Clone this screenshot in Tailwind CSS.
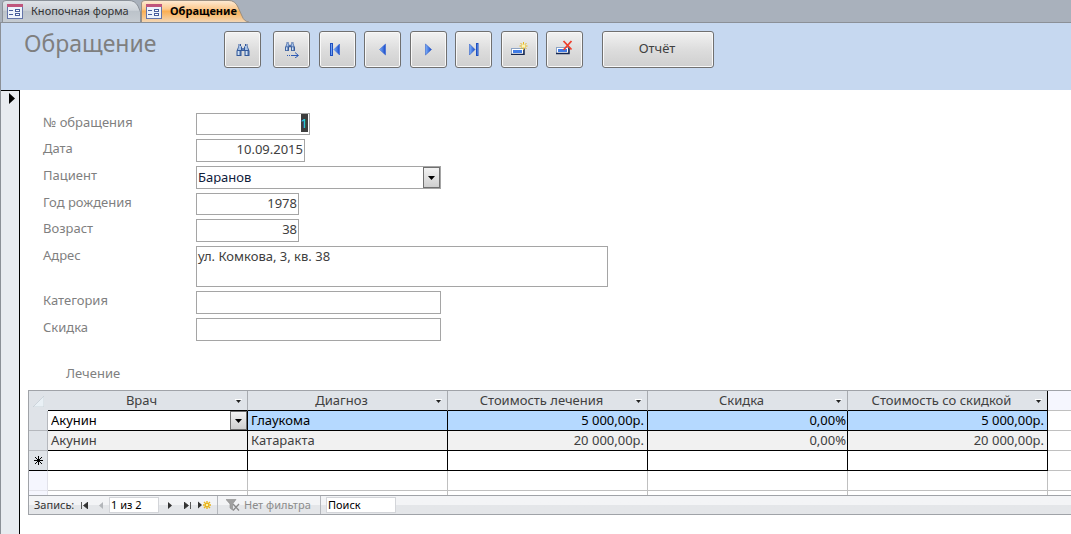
<!DOCTYPE html>
<html lang="ru">
<head>
<meta charset="utf-8">
<meta name="viewport" content="width=device-width, initial-scale=1">
<title>Обращение</title>
<script src="https://cdn.jsdelivr.net/npm/@tailwindcss/browser@4"></script>
</head>
<body class="flex min-h-screen flex-col overflow-x-hidden bg-white font-['Noto_Sans','Open_Sans',sans-serif] text-[13px] leading-5 text-[#404040]">

<svg class="absolute size-0" aria-hidden="true">
  <defs>
    <linearGradient id="gTab" x1="0" y1="0" x2="0" y2="1">
      <stop offset="0" stop-color="#dfe3e7"/><stop offset=".45" stop-color="#ced3d9"/><stop offset=".5" stop-color="#bcc3ca"/><stop offset="1" stop-color="#c6ccd2"/>
    </linearGradient>
    <linearGradient id="gAct" x1="0" y1="0" x2="0" y2="1">
      <stop offset="0" stop-color="#fdebd6"/><stop offset=".4" stop-color="#fcc98e"/><stop offset=".5" stop-color="#fbaf52"/><stop offset="1" stop-color="#f3d6b4"/>
    </linearGradient>
    <linearGradient id="gBlue" x1="0" y1="0" x2="1" y2="0">
      <stop offset="0" stop-color="#7fb2fb"/><stop offset="1" stop-color="#1748c8"/>
    </linearGradient>
    <linearGradient id="gBin" x1="0" y1="0" x2="1" y2="0">
      <stop offset="0" stop-color="#3a62a0"/><stop offset=".35" stop-color="#d5e5f7"/><stop offset="1" stop-color="#234c92"/>
    </linearGradient>
    <symbol id="form" viewBox="0 0 16 15">
      <rect x=".5" y=".5" width="15" height="14" fill="#eef3fb" stroke="#6474a8"/>
      <rect x="0" y="0" width="16" height="3" fill="#c0557c"/>
      <path d="M2 6.500h4M2 10.500h4" stroke="#4a5f9c"/>
      <rect x="8.500" y="5.500" width="4" height="2" fill="#fff" stroke="#4a5f9c"/>
      <rect x="8.500" y="9.500" width="4" height="2" fill="#fff" stroke="#4a5f9c"/>
    </symbol>
    <symbol id="bino" viewBox="0 0 16 14">
      <path d="M3.500 1h2.500v2l1 1v1h2v-1l1-1v-2h2.500v2l2 5v5h-5v-5h-3v5h-5v-5l2-5z" fill="#34599a"/>
      <path d="M4 3h2v4h-3zM10 3h2l1 4h-3z" fill="#a9c4e8"/>
      <rect x="2" y="8" width="4" height="4" fill="url(#gBin)"/>
      <rect x="10" y="8" width="4" height="4" fill="url(#gBin)"/>
      <path d="M4 2h1M11 2h1M7.500 6h1" stroke="#dfeafa"/>
    </symbol>
    <symbol id="rec" viewBox="0 0 16 14">
      <rect x=".5" y="6.500" width="12" height="6" fill="#fff" stroke="#8da3c4"/>
      <path d="M0 12.500h13v-6" fill="none" stroke="#15264f" stroke-width="1.500"/>
      <rect x="2" y="8" width="9" height="3" fill="#3f7be6"/>
    </symbol>
    <symbol id="down" viewBox="0 0 7 4"><path d="M0 0h7L3.500 4z" fill="#000"/></symbol>
    <symbol id="hdown" viewBox="0 0 7 4"><path d="M0 0h7" stroke="#fff" stroke-width="2"/><path d="M1 1h5L3.500 4z" fill="#222"/></symbol>
  </defs>
</svg>

<nav class="flex h-[23px] shrink-0 border-b border-[#8b9097] bg-[#a9b1bc] pl-[2px]" aria-label="Открытые формы">
  <button type="button" class="relative flex h-[22px] w-[139px] items-center gap-2 pl-[5px] text-[11px] text-[#333]">
    <svg class="absolute inset-0" width="139" height="22" aria-hidden="true"><path d="M.5 22V3Q.5 .5 4 .5H127Q133 .5 136 6L138.500 12V22" fill="url(#gTab)" stroke="#8b9199"/></svg>
    <svg class="relative shrink-0" width="16" height="15" aria-hidden="true"><use href="#form"/></svg>
    <span class="relative whitespace-nowrap">Кнопочная форма</span>
  </button>
  <button type="button" aria-current="page" class="relative flex h-[22px] w-[108px] items-center gap-2 pl-[5px] text-[11px] font-bold text-black">
    <svg class="absolute inset-0" width="108" height="22" aria-hidden="true"><path d="M.5 22V3Q.5 .5 4 .5H88Q94 .5 97 7L101 16Q103 21.500 108 22" fill="url(#gAct)" stroke="#9a8f82"/></svg>
    <svg class="relative shrink-0" width="16" height="15" aria-hidden="true"><use href="#form"/></svg>
    <span class="relative">Обращение</span>
  </button>
</nav>

<div class="flex grow flex-col border-l border-[#8b9097]">
  <header class="flex h-[67px] shrink-0 items-start bg-[#c6d8f0] pl-[23px] pt-2">
    <h1 class="w-[200px] text-[23px] leading-6 text-[#7f7f7f]">Обращение</h1>
    <button type="button" aria-label="Найти" class="flex size-[37px] items-center justify-center rounded-[3px] border border-[#707070] bg-linear-to-b from-[#f2f2f2] from-0% via-[#dddddd] via-50% to-[#cfcfcf] shadow-[inset_0_0_0_1px_#f8f8f8]">
      <svg width="16" height="14"><use href="#bino"/></svg>
    </button>
    <div class="ml-3 flex w-[310px] justify-between">
      <button type="button" aria-label="Найти далее" class="flex size-[37px] items-center justify-center rounded-[3px] border border-[#707070] bg-linear-to-b from-[#f2f2f2] from-0% via-[#dddddd] via-50% to-[#cfcfcf] shadow-[inset_0_0_0_1px_#f8f8f8]">
        <svg width="16" height="17" viewBox="0 0 16 17"><use href="#bino" x="0" y="0" width="12" height="11"/><path d="M3 14.500h1M5 14.500h1M7 14.500h7" stroke="#2f5bb5"/><path d="M11 11.500l3.500 3L11 17" fill="none" stroke="#2f5bb5"/></svg>
      </button>
      <button type="button" aria-label="Первая запись" class="flex size-[37px] items-center justify-center rounded-[3px] border border-[#707070] bg-linear-to-b from-[#f2f2f2] from-0% via-[#dddddd] via-50% to-[#cfcfcf] shadow-[inset_0_0_0_1px_#f8f8f8]">
        <svg class="mr-1" width="10" height="13" viewBox="0 0 10 13"><rect x=".5" y=".5" width="2" height="12" fill="#6f9ff0" stroke="#1f4fc0"/><path d="M9.500 1v11L4 6.500z" fill="url(#gBlue)" stroke="#2a5cd0" stroke-width=".5"/></svg>
      </button>
      <button type="button" aria-label="Предыдущая запись" class="flex size-[37px] items-center justify-center rounded-[3px] border border-[#707070] bg-linear-to-b from-[#f2f2f2] from-0% via-[#dddddd] via-50% to-[#cfcfcf] shadow-[inset_0_0_0_1px_#f8f8f8]">
        <svg width="7" height="13" viewBox="0 0 7 13"><path d="M6.500 1v11L.5 6.500z" fill="url(#gBlue)" stroke="#2a5cd0" stroke-width=".5"/></svg>
      </button>
      <button type="button" aria-label="Следующая запись" class="flex size-[37px] items-center justify-center rounded-[3px] border border-[#707070] bg-linear-to-b from-[#f2f2f2] from-0% via-[#dddddd] via-50% to-[#cfcfcf] shadow-[inset_0_0_0_1px_#f8f8f8]">
        <svg width="7" height="13" viewBox="0 0 7 13"><path d="M.5 1v11l6-5.500z" fill="url(#gBlue)" stroke="#1f4fc0" stroke-width=".5"/></svg>
      </button>
      <button type="button" aria-label="Последняя запись" class="flex size-[37px] items-center justify-center rounded-[3px] border border-[#707070] bg-linear-to-b from-[#f2f2f2] from-0% via-[#dddddd] via-50% to-[#cfcfcf] shadow-[inset_0_0_0_1px_#f8f8f8]">
        <svg width="10" height="13" viewBox="0 0 10 13"><rect x="7.500" y=".5" width="1.500" height="12" fill="#6f9ff0" stroke="#1f4fc0"/><path d="M.5 1v11L6 6.500z" fill="url(#gBlue)" stroke="#1f4fc0" stroke-width=".5"/></svg>
      </button>
      <button type="button" aria-label="Добавить запись" class="flex size-[37px] items-center justify-center rounded-[3px] border border-[#707070] bg-linear-to-b from-[#f2f2f2] from-0% via-[#dddddd] via-50% to-[#cfcfcf] shadow-[inset_0_0_0_1px_#f8f8f8]">
        <svg class="mb-1" width="17" height="14" viewBox="0 0 17 14"><use href="#rec" x="0" y="1" width="16" height="14"/><path d="M12.500 1v8M8.500 5h8M9.500 2l6 6M15.500 2l-6 6" stroke="#e8b91e"/><rect x="11" y="3.500" width="3" height="3" fill="#fff6b0"/></svg>
      </button>
      <button type="button" aria-label="Удалить запись" class="flex size-[37px] items-center justify-center rounded-[3px] border border-[#707070] bg-linear-to-b from-[#f2f2f2] from-0% via-[#dddddd] via-50% to-[#cfcfcf] shadow-[inset_0_0_0_1px_#f8f8f8]">
        <svg class="mb-1" width="17" height="15" viewBox="0 0 17 15"><use href="#rec" x="0" y="1" width="16" height="14"/><path d="M7.500 1l8 8.500M15.500 1l-8 9" stroke="#ee3f2c" stroke-width="1.800"/></svg>
      </button>
    </div>
    <button type="button" class="ml-[19px] h-[37px] w-[112px] rounded-[3px] border border-[#707070] bg-linear-to-b from-[#f2f2f2] from-0% via-[#dddddd] via-50% to-[#cfcfcf] pb-1 pr-[2px] shadow-[inset_0_0_0_1px_#f8f8f8]">Отчёт</button>
  </header>

  <div class="flex grow">
    <button type="button" aria-label="Выделить запись" class="flex w-[19px] shrink-0 items-start justify-end border-r border-t border-black bg-[#e8ebf0] pr-1 pt-[2px]">
      <svg width="6" height="11" viewBox="0 0 6 11"><path d="M0 0v11l6-5.500z" fill="#000"/></svg>
    </button>

    <main class="min-w-0 grow pl-2 pt-[23px]">
      <form class="flex flex-col gap-1 pl-[15px] text-[13px]">
        <div class="flex items-start"><label for="num" class="w-[153px] leading-[18px] text-[#7f7f7f]">№ обращения</label>
          <input id="num" value="1" autofocus class="h-[22px] w-[114px] border border-[#a5a5a5] px-px pb-[2px] text-right leading-5 outline-none selection:bg-[#3d3d3d] selection:text-[#22d8f0]"></div>
        <div class="flex items-start"><label for="date" class="w-[153px] leading-[18px] text-[#7f7f7f]">Дата</label>
          <input id="date" value="10.09.2015" class="h-[23px] w-[109px] border border-[#a5a5a5] px-px pb-1 text-right"></div>
        <div class="flex items-start"><label for="pat" class="w-[153px] leading-[18px] text-[#7f7f7f]">Пациент</label>
          <div class="relative h-[23px] w-[245px] border border-[#a5a5a5]">
            <select id="pat" class="block h-[21px] w-full appearance-none px-px pb-1 leading-5 text-[#10203c]"><option>Баранов</option></select>
            <span class="pointer-events-none absolute inset-y-0 right-0 flex w-[17px] items-center justify-center border border-[#707070] bg-linear-to-b from-[#f2f2f2] to-[#cfcfcf]"><svg width="7" height="4"><use href="#down"/></svg></span>
          </div></div>
        <div class="flex items-start"><label for="year" class="w-[153px] leading-[18px] text-[#7f7f7f]">Год рождения</label>
          <input id="year" value="1978" class="h-[22px] w-[103px] border border-[#a5a5a5] px-px pb-[2px] text-right"></div>
        <div class="flex items-start"><label for="age" class="w-[153px] leading-[18px] text-[#7f7f7f]">Возраст</label>
          <input id="age" value="38" class="h-[23px] w-[103px] border border-[#a5a5a5] px-px pb-1 text-right"></div>
        <div class="flex items-start"><label for="addr" class="w-[153px] leading-[18px] text-[#7f7f7f]">Адрес</label>
          <textarea id="addr" class="block h-[41px] w-[412px] resize-none overflow-hidden border border-[#a5a5a5] px-px leading-[18px]">ул. Комкова, 3, кв. 38</textarea></div>
        <div class="flex items-start"><label for="cat" class="w-[153px] leading-[18px] text-[#7f7f7f]">Категория</label>
          <input id="cat" class="h-[23px] w-[245px] border border-[#a5a5a5] px-px"></div>
        <div class="flex items-start"><label for="disc" class="w-[153px] leading-[18px] text-[#7f7f7f]">Скидка</label>
          <input id="disc" class="h-[23px] w-[245px] border border-[#a5a5a5] px-px"></div>
      </form>

      <h2 class="mt-[22px] pl-[38px] text-[#7f7f7f]">Лечение</h2>

      <section class="mt-[7px] border-y border-l border-[#a0a3a8]">
        <table class="w-full table-fixed border-separate border-spacing-0 text-[13px] leading-[19px]">
          <colgroup><col class="w-[19px]"><col class="w-[200px]"><col class="w-[200px]"><col class="w-[200px]"><col class="w-[200px]"><col class="w-[200px]"><col></colgroup>
          <thead>
            <tr class="h-5">
              <th class="bg-[#dfe3e8] p-0"><svg class="mx-auto" width="11" height="11" viewBox="0 0 11 11"><path d="M11 0v11H0z" fill="#e9f0f5" stroke="#c3ccd3" stroke-width=".7"/></svg></th>
              <th class="border-b border-r border-b-black border-r-[#a8abb0] bg-[#dfe3e8] p-0 font-normal"><div class="flex items-center pr-[5px]"><span class="grow text-center">Врач</span><svg width="7" height="4"><use href="#hdown"/></svg></div></th>
              <th class="border-b border-r border-b-black border-r-[#a8abb0] bg-[#dfe3e8] p-0 font-normal"><div class="flex items-center pr-[5px]"><span class="grow text-center">Диагноз</span><svg width="7" height="4"><use href="#hdown"/></svg></div></th>
              <th class="border-b border-r border-b-black border-r-[#a8abb0] bg-[#dfe3e8] p-0 font-normal"><div class="flex items-center pr-[5px]"><span class="grow text-center">Стоимость лечения</span><svg width="7" height="4"><use href="#hdown"/></svg></div></th>
              <th class="border-b border-r border-b-black border-r-[#a8abb0] bg-[#dfe3e8] p-0 font-normal"><div class="flex items-center pr-[5px]"><span class="grow text-center">Скидка</span><svg width="7" height="4"><use href="#hdown"/></svg></div></th>
              <th class="border-b border-r border-black bg-[#dfe3e8] p-0 font-normal"><div class="flex items-center pr-[5px]"><span class="grow text-center">Стоимость со скидкой</span><svg width="7" height="4"><use href="#hdown"/></svg></div></th>
              <td class="border-b border-[#c0c0c0] bg-[#f5f6fe] p-0"></td>
            </tr>
          </thead>
          <tbody>
            <tr class="h-5 text-black">
              <td class="border-b border-r border-[#b5b8bd] bg-[#dfe3e8] p-0"></td>
              <td class="border-b border-r border-black p-0"><div class="relative"><select aria-label="Врач" class="block h-[19px] w-full appearance-none pl-[3px] leading-[19px]"><option>Акунин</option></select><span class="pointer-events-none absolute inset-y-0 right-0 flex w-[17px] items-center justify-center border border-[#707070] bg-linear-to-b from-[#f2f2f2] to-[#cfcfcf]"><svg width="7" height="4"><use href="#down"/></svg></span></div></td>
              <td class="border-b border-r border-black bg-[#b5d9ff] p-0 pl-[3px]">Глаукома</td>
              <td class="border-b border-r border-black bg-[#b5d9ff] p-0 pr-[3px] text-right">5 000,00р.</td>
              <td class="border-b border-r border-black bg-[#b5d9ff] p-0 pr-px text-right">0,00%</td>
              <td class="border-b border-r border-black bg-[#b5d9ff] p-0 pr-[3px] text-right">5 000,00р.</td>
              <td class="border-b border-[#c0c0c0] p-0"></td>
            </tr>
            <tr class="h-5">
              <td class="border-b border-r border-[#b5b8bd] bg-[#dfe3e8] p-0"></td>
              <td class="border-b border-r border-black bg-[#f1f1f1] p-0 pl-[3px]">Акунин</td>
              <td class="border-b border-r border-black bg-[#f1f1f1] p-0 pl-[3px]">Катаракта</td>
              <td class="border-b border-r border-black bg-[#f1f1f1] p-0 pr-[3px] text-right">20 000,00р.</td>
              <td class="border-b border-r border-black bg-[#f1f1f1] p-0 pr-px text-right">0,00%</td>
              <td class="border-b border-r border-black bg-[#f1f1f1] p-0 pr-[3px] text-right">20 000,00р.</td>
              <td class="border-b border-[#c0c0c0] p-0"></td>
            </tr>
            <tr class="h-5">
              <td class="border-b border-r border-b-black border-r-[#b5b8bd] bg-[#dfe3e8] p-0"><svg class="mx-auto" width="9" height="9" viewBox="0 0 9 9"><path d="M4.500 0v9M0 4.500h9M1 1l7 7M8 1L1 8" stroke="#000"/></svg></td>
              <td class="border-b border-r border-black p-0"></td>
              <td class="border-b border-r border-black p-0"></td>
              <td class="border-b border-r border-black p-0"></td>
              <td class="border-b border-r border-black p-0"></td>
              <td class="border-b border-r border-black p-0"></td>
              <td class="border-b border-[#c0c0c0] p-0"></td>
            </tr>
            <tr class="h-5">
              <td class="border-b border-r border-[#e2e2ea] bg-[#f5f6fe] p-0"></td>
              <td class="border-b border-r border-[#c0c0c0] p-0"></td>
              <td class="border-b border-r border-[#c0c0c0] p-0"></td>
              <td class="border-b border-r border-[#c0c0c0] p-0"></td>
              <td class="border-b border-r border-[#c0c0c0] p-0"></td>
              <td class="border-b border-r border-[#c0c0c0] p-0"></td>
              <td class="border-b border-[#c0c0c0] p-0"></td>
            </tr>
            <tr class="h-1">
              <td class="border-r border-[#e2e2ea] bg-[#f5f6fe] p-0"></td>
              <td class="border-r border-[#c0c0c0] p-0"></td>
              <td class="border-r border-[#c0c0c0] p-0"></td>
              <td class="border-r border-[#c0c0c0] p-0"></td>
              <td class="border-r border-[#c0c0c0] p-0"></td>
              <td class="border-r border-[#c0c0c0] p-0"></td>
              <td class="p-0"></td>
            </tr>
          </tbody>
        </table>

        <div class="flex h-[19px] items-center border-t border-[#a0a3a8] bg-linear-to-b from-[#f3f4f6] from-50% to-[#e4e6e9] to-50% pl-[5px] text-[11px] leading-4 text-[#333]">
          <label for="pos" class="w-[47px] whitespace-nowrap">Запись:</label>
          <button type="button" aria-label="Первая запись"><svg width="7" height="7" viewBox="0 0 7 7"><path d="M.5 0v7M7 0v7L2.500 3.500z" fill="#333" stroke="#333" stroke-width=".8"/></svg></button>
          <button type="button" aria-label="Предыдущая запись" disabled class="ml-[11px]"><svg width="4" height="7" viewBox="0 0 4 7"><path d="M4 0v7L0 3.500z" fill="#b3b6ba"/></svg></button>
          <input id="pos" value="1 из 2" class="ml-[6px] h-4 w-[50px] border border-[#d3d5d9] bg-white pl-px text-black">
          <button type="button" aria-label="Следующая запись" class="ml-[9px]"><svg width="4" height="7" viewBox="0 0 4 7"><path d="M0 0v7l4-3.500z" fill="#333"/></svg></button>
          <button type="button" aria-label="Последняя запись" class="ml-3"><svg width="7" height="7" viewBox="0 0 7 7"><path d="M6.500 0v7M0 0v7l4.500-3.500z" fill="#333" stroke="#333" stroke-width=".8"/></svg></button>
          <button type="button" aria-label="Новая запись" class="ml-[7px]"><svg width="13" height="8" viewBox="0 0 13 8"><path d="M0 .5v7L4 4z" fill="#333"/><path d="M9 0v8M5 4h8M6 1l6 6M12 1l-6 6" stroke="#e9b41b" stroke-width="1.400"/><rect x="8" y="3" width="2" height="2" fill="#fff3a8"/></svg></button>
          <button type="button" disabled class="ml-[6px] flex h-full w-[104px] items-center gap-1 whitespace-nowrap border-x border-[#b4b7bc] pl-2 text-[#8c8c8c]"><svg class="shrink-0" width="14" height="12" viewBox="0 0 14 12"><path d="M0 .5h10L6.500 5v6L4 9V5z" fill="#a0a0a0" stroke="#8a8a8a" stroke-width=".6"/><path d="M7 5l6 6.500M13 5l-6 6.500" stroke="#8a8a8a" stroke-width="1.300"/></svg>Нет фильтра</button>
          <input aria-label="Поиск" value="Поиск" class="ml-[5px] h-4 w-[70px] border border-[#d3d5d9] bg-white pl-px text-black">
        </div>
      </section>
    </main>
  </div>
</div>
<script>
  const num = document.getElementById('num');
  num.focus();
  num.select();
</script>
</body>
</html>
